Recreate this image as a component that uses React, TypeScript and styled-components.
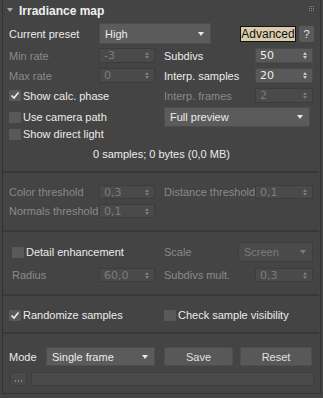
import React from "react";
import styled, { createGlobalStyle } from "styled-components";

const Global = createGlobalStyle`
  html, body { margin: 0; padding: 0; background: #444444; }
  body { font-family: "Liberation Sans", Arial, sans-serif; font-size: 11px; color: #e6e6e6; }
  * { box-sizing: border-box; }
`;

const Panel = styled.div`
  margin-left: 2px;
  width: 319px;
  height: 394px;
  border: 1px solid #323232;
  border-top: none;
  background: #444444;
  display: flex;
  flex-direction: column;
`;

const Header = styled.div`
  height: 20px;
  display: flex;
  align-items: center;
  padding-left: 4px;
  position: relative;
`;

const Title = styled.span`
  font-weight: bold;
  font-size: 12px;
  color: #f0f0f0;
  margin-left: 6px;
  margin-top: 1px;
`;

const Grip = styled.div`
  position: absolute;
  right: 6px;
  top: 6px;
  display: grid;
  grid-template-columns: repeat(3, 1px);
  grid-gap: 1px;
  & > i { width: 1px; height: 1px; background: #8a8a8a; display: block; }
`;

const Row = styled.div<{ $h: number; $mt: number; $gap?: number }>`
  height: ${(p) => p.$h}px;
  margin-top: ${(p) => p.$mt}px;
  padding: 0 6px;
  display: flex;
  align-items: center;
  gap: ${(p) => (p.$gap === undefined ? 9 : p.$gap)}px;
`;

const Half = styled.div<{ $w: number }>`
  width: ${(p) => p.$w}px;
  height: 100%;
  display: flex;
  align-items: center;
`;

const Label = styled.span<{ $w?: number; $dis?: boolean; $indent?: number }>`
  ${(p) => (p.$w ? `width: ${p.$w}px;` : "")}
  flex-shrink: 0;
  color: ${(p) => (p.$dis ? "#8a8a8a" : "#ececec")};
  padding-left: ${(p) => p.$indent || 0}px;
  white-space: nowrap;
`;

const Field = styled.div<{ $dis?: boolean; $h: number }>`
  flex: 1;
  height: ${(p) => p.$h}px;
  background: ${(p) => (p.$dis ? "#4a4a4a" : "#595959")};
  border: 1px solid ${(p) => (p.$dis ? "#3c3c3c" : "#4b4b4b")};
  color: ${(p) => (p.$dis ? "#7c7c7c" : "#ececec")};
  display: flex;
  align-items: center;
  justify-content: space-between;
  padding: 0 5px 0 4px;
  font-family: "DejaVu Sans", sans-serif;
  font-size: 11px;
`;

const Select = styled.div<{ $dis?: boolean; $h: number; $w?: number }>`
  ${(p) => (p.$w ? `width: ${p.$w}px;` : "flex: 1;")}
  flex-shrink: 0;
  height: ${(p) => p.$h}px;
  background: ${(p) => (p.$dis ? "#4a4a4a" : "#5b5b5b")};
  border: 1px solid ${(p) => (p.$dis ? "#3d3d3d" : "#4d4d4d")};
  color: ${(p) => (p.$dis ? "#7c7c7c" : "#ececec")};
  display: flex;
  align-items: center;
  justify-content: space-between;
  padding: 0 6px 0 5px;
  font-size: 11px;
`;

const Arrows = styled.div<{ $dis?: boolean }>`
  display: flex;
  flex-direction: column;
  gap: 1px;
  & > i {
    display: block;
    width: 0;
    height: 0;
    border-left: 2.5px solid transparent;
    border-right: 2.5px solid transparent;
  }
  & > i:first-child { border-bottom: 3px solid ${(p) => (p.$dis ? "#7a7a7a" : "#c8c8c8")}; }
  & > i:last-child { border-top: 3px solid ${(p) => (p.$dis ? "#7a7a7a" : "#c8c8c8")}; }
`;

const Caret = styled.i<{ $dis?: boolean }>`
  display: block;
  width: 0;
  height: 0;
  border-left: 3.5px solid transparent;
  border-right: 3.5px solid transparent;
  border-top: 4px solid ${(p) => (p.$dis ? "#7a7a7a" : "#e8e8e8")};
`;

const Check = styled.div<{ $indent?: number }>`
  display: flex;
  align-items: center;
  gap: 2px;
  margin-left: ${(p) => p.$indent || 0}px;
`;

const Box = styled.span`
  width: 12px;
  height: 11px;
  background: #595959;
  border-radius: 1px;
  display: flex;
  align-items: center;
  justify-content: center;
`;

const Button = styled.div<{ $w?: number; $ml?: number }>`
  ${(p) => (p.$w ? `width: ${p.$w}px;` : "flex: 1;")}
  margin-left: ${(p) => p.$ml || 0}px;
  height: 19px;
  background: #585858;
  border: 1px solid #4e4e4e;
  border-radius: 2px;
  color: #e0e0e0;
  display: flex;
  align-items: center;
  justify-content: center;
`;

const AdvButton = styled.div`
  width: 56px;
  height: 16px;
  margin-left: 29px;
  background: #d9ccaa;
  border: 1px solid #111;
  color: #111;
  display: flex;
  align-items: center;
  justify-content: center;
  font-size: 12px;
`;

const HelpButton = styled.div`
  width: 15px;
  height: 16px;
  margin-left: 3px;
  background: #5a5a5a;
  border-radius: 2px;
  color: #e0e0e0;
  display: flex;
  align-items: center;
  justify-content: center;
`;

const Info = styled.div`
  height: 14px;
  margin-top: 7px;
  text-align: center;
  color: #ececec;
  line-height: 14px;
`;

const Separator = styled.div<{ $mt: number }>`
  height: 2px;
  margin: ${(p) => p.$mt}px 1px 0 0;
  background: #383838;
`;

const Dots = styled.div`
  width: 17px;
  height: 14px;
  background: #4a4a4a;
  border: 1px solid #3e3e3e;
  border-radius: 2px;
  margin-left: 1px;
  display: flex;
  align-items: flex-end;
  justify-content: center;
  gap: 2px;
  padding-bottom: 3px;
  & > i { display: block; width: 1px; height: 2px; background: #8a8a8a; }
`;

const TextBox = styled.div`
  flex: 1;
  height: 14px;
  background: #4a4a4a;
  border: 1px solid #3e3e3e;
  margin-left: 4px;
`;

function CheckMark() {
  return (
    <svg width="10" height="9" viewBox="0 0 10 9">
      <path d="M1.5 4.5 L4 7 L8.5 1.5" stroke="#f0f0f0" strokeWidth="1.6" fill="none" />
    </svg>
  );
}

const Spinner = ({ v, dis, h = 15 }: { v: string; dis?: boolean; h?: number }) => (
  <Field $dis={dis} $h={h}>
    <span>{v}</span>
    <Arrows $dis={dis}>
      <i />
      <i />
    </Arrows>
  </Field>
);

const Drop = ({ v, dis, h = 20, w }: { v: string; dis?: boolean; h?: number; w?: number }) => (
  <Select $dis={dis} $h={h} $w={w}>
    <span>{v}</span>
    <Caret $dis={dis} />
  </Select>
);

const CheckItem = ({ label, on, indent }: { label: string; on?: boolean; indent?: number }) => (
  <Check $indent={indent}>
    <Box>{on && <CheckMark />}</Box>
    <Label>{label}</Label>
  </Check>
);

export default function App() {
  return (
    <>
      <Global />
      <Panel>
        <Header>
          <svg width="6" height="5" viewBox="0 0 6 5">
            <path d="M0 0 H6 L3 4 Z" fill="#a8a8a8" />
          </svg>
          <Title>Irradiance map</Title>
          <Grip>
            {Array.from({ length: 9 }).map((_, i) => (
              <i key={i} />
            ))}
          </Grip>
        </Header>

        <Row $h={21} $mt={3} $gap={0}>
          <Label $w={90}>Current preset</Label>
          <Drop v="High" h={21} w={112} />
          <AdvButton>Advanced</AdvButton>
          <HelpButton>?</HelpButton>
        </Row>

        <Row $h={15} $mt={4}>
          <Half $w={146}>
            <Label $w={90} $dis>Min rate</Label>
            <Spinner v="-3" dis />
          </Half>
          <Half $w={149}>
            <Label $w={91}>Subdivs</Label>
            <Spinner v="50" />
          </Half>
        </Row>

        <Row $h={15} $mt={5}>
          <Half $w={146}>
            <Label $w={90} $dis>Max rate</Label>
            <Spinner v="0" dis />
          </Half>
          <Half $w={149}>
            <Label $w={91}>Interp. samples</Label>
            <Spinner v="20" />
          </Half>
        </Row>

        <Row $h={15} $mt={5}>
          <Half $w={146}>
            <CheckItem label="Show calc. phase" on />
          </Half>
          <Half $w={149}>
            <Label $w={91} $dis>Interp. frames</Label>
            <Spinner v="2" dis />
          </Half>
        </Row>

        <Row $h={20} $mt={4}>
          <Half $w={146}>
            <CheckItem label="Use camera path" />
          </Half>
          <Half $w={149}>
            <Drop v="Full preview" w={146} />
          </Half>
        </Row>

        <Row $h={12} $mt={1}>
          <Half $w={146}>
            <CheckItem label="Show direct light" />
          </Half>
        </Row>

        <Info>0 samples; 0 bytes (0,0 MB)</Info>

        <Separator $mt={10} />

        <Row $h={14} $mt={12}>
          <Half $w={146}>
            <Label $w={90} $dis>Color threshold</Label>
            <Spinner v="0,3" dis h={14} />
          </Half>
          <Half $w={149}>
            <Label $w={91} $dis>Distance threshold</Label>
            <Spinner v="0,1" dis h={14} />
          </Half>
        </Row>

        <Row $h={14} $mt={5}>
          <Half $w={146}>
            <Label $w={90} $dis>Normals threshold</Label>
            <Spinner v="0,1" dis h={14} />
          </Half>
        </Row>

        <Separator $mt={12} />

        <Row $h={20} $mt={10}>
          <Half $w={146}>
            <CheckItem label="Detail enhancement" indent={3} />
          </Half>
          <Half $w={149}>
            <Label $w={74} $dis>Scale</Label>
            <Drop v="Screen" dis w={75} />
          </Half>
        </Row>

        <Row $h={14} $mt={6}>
          <Half $w={146}>
            <Label $w={90} $dis $indent={3}>Radius</Label>
            <Spinner v="60,0" dis h={14} />
          </Half>
          <Half $w={149}>
            <Label $w={91} $dis>Subdivs mult.</Label>
            <Spinner v="0,3" dis h={14} />
          </Half>
        </Row>

        <Separator $mt={12} />

        <Row $h={12} $mt={13}>
          <Half $w={146}>
            <CheckItem label="Randomize samples" on />
          </Half>
          <Half $w={149}>
            <CheckItem label="Check sample visibility" />
          </Half>
        </Row>

        <Separator $mt={11} />

        <Row $h={19} $mt={13}>
          <Half $w={146}>
            <Label $w={37}>Mode</Label>
            <Drop v="Single frame" h={19} />
          </Half>
          <Half $w={149}>
            <Button $w={69}>Save</Button>
            <Button $w={72} $ml={7}>Reset</Button>
          </Half>
        </Row>

        <Row $h={14} $mt={6} $gap={0}>
          <Dots>
            <i />
            <i />
            <i />
          </Dots>
          <TextBox />
        </Row>
      </Panel>
    </>
  );
}
